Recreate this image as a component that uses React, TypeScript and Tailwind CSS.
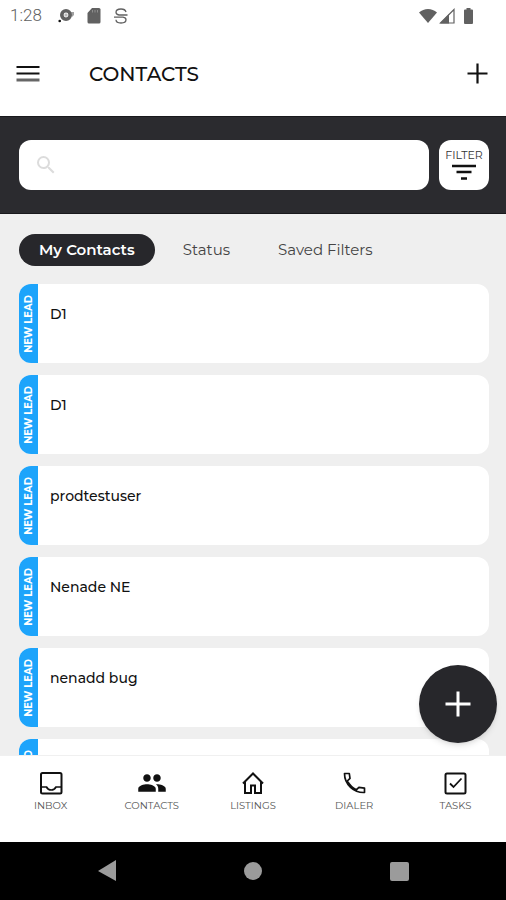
import { useState } from "react";
import type { ReactNode } from "react";
import { MdPeople, MdSearch } from "react-icons/md";

const tabs = ["My Contacts", "Status", "Saved Filters"];

const contacts = [
  { id: 1, name: "D1", status: "NEW LEAD" },
  { id: 2, name: "D1", status: "NEW LEAD" },
  { id: 3, name: "prodtestuser", status: "NEW LEAD" },
  { id: 4, name: "Nenade NE", status: "NEW LEAD" },
  { id: 5, name: "nenadd bug", status: "NEW LEAD" },
  { id: 6, name: "", status: "NEW LEAD" },
];

function InboxIcon() {
  return (
    <svg width="28" height="28" viewBox="0 0 28 28" fill="none" stroke="currentColor" strokeWidth="2">
      <rect x="4" y="4" width="20.500" height="20.500" rx="1.500" />
      <path d="M4 18h5.500q1.500 3 4.700 3t4.800-3h5.500" strokeWidth="1.700" />
    </svg>
  );
}

function HomeIcon() {
  return (
    <svg width="28" height="28" viewBox="0 0 28 28" fill="none" stroke="currentColor" strokeWidth="2">
      <path d="M4 14.500 14 4.500l10 10M6 13V24h6v-7.500h4V24h6V13" />
    </svg>
  );
}

function PhoneIcon() {
  return (
    <svg width="28" height="28" viewBox="0 0 28 28" fill="none" stroke="currentColor" strokeWidth="1.700" strokeLinejoin="round">
      <path d="M4.500 4.500h4.800l.7 4.800-2.700 2.700q3.500 6.200 9 8.800l2.600-2.500 5.600.9v4.300C14 24 4.500 15.500 4.500 4.500z" />
    </svg>
  );
}

function TaskIcon() {
  return (
    <svg width="28" height="28" viewBox="0 0 28 28" fill="none" stroke="currentColor" strokeWidth="2">
      <rect x="4.500" y="4.500" width="20" height="20" rx="1.500" />
      <path d="m9 14.500 3.500 3.500 8-8.500" strokeWidth="1.800" />
    </svg>
  );
}

const navItems: { label: string; icon: ReactNode }[] = [
  { label: "INBOX", icon: <InboxIcon /> },
  { label: "CONTACTS", icon: <MdPeople size={30} /> },
  { label: "LISTINGS", icon: <HomeIcon /> },
  { label: "DIALER", icon: <PhoneIcon /> },
  { label: "TASKS", icon: <TaskIcon /> },
];

function StatusBar() {
  return (
    <div className="flex h-8 shrink-0 items-center justify-between pl-2.5 pr-8 text-[#616161]">
      <div className="flex items-center">
        <span className="w-12 font-['Roboto',sans-serif] text-[17px] font-light">1:28</span>
        {/* Debug, SD card and sync notifications */}
        <svg width="17" height="16" viewBox="0 0 17 16">
          <circle cx="8" cy="7" r="4.200" fill="none" stroke="currentColor" strokeWidth="3.600" />
          <rect x="6.500" y="5.500" width="3" height="3" fill="#bbb" />
          <circle cx="1.700" cy="13" r="1.300" fill="#111" />
          <path d="M13 4h3v3l-2 2z" fill="currentColor" opacity=".6" />
        </svg>
        <svg className="ml-3" width="14" height="16" viewBox="0 0 14 16" fill="currentColor">
          <path d="M5 0h7q1.500 0 1.500 1.500v12.500q0 1.500-1.500 1.500H2Q.5 15.500.5 14V5z" />
          <path d="M5.500 2v2.500M8 2v2.500M10.500 2v2.500" stroke="#999" strokeWidth=".8" />
        </svg>
        <svg className="ml-3" width="16" height="16" viewBox="0 0 16 16" fill="none" stroke="currentColor" strokeWidth="1.300">
          <path d="M13 4C12.500 2 10.500 1 8 1 4.500 1 3 2.500 3 4.300 3 6 4.200 6.700 6 7h8.500M1 9.200h9c2 .3 3 1.200 3 2.600 0 2-2 3.200-5 3.200s-5-1.200-5-3.200" />
        </svg>
      </div>
      <div className="flex items-center">
        <svg width="18" height="16" viewBox="0 0 18 16" fill="currentColor">
          <path d="M9 15 0 4.500Q4 1 9 1t9 3.500z" />
        </svg>
        <svg className="ml-0.5" width="16" height="16" viewBox="0 0 16 16">
          <path d="M1.500 15 15 1.500V15z" fill="none" stroke="currentColor" strokeWidth="1.200" />
          <path d="M1 15.500 10 6v9.500z" fill="currentColor" />
        </svg>
        <svg className="ml-2" width="11" height="16" viewBox="0 0 11 16" fill="currentColor">
          <path d="M3.500 0h4v1.500H9q1 0 1 1V15q0 1-1 1H2q-1 0-1-1V2.500q0-1 1-1h1.500z" />
        </svg>
      </div>
    </div>
  );
}

export default function App() {
  const [activeTab, setActiveTab] = useState(tabs[0]);
  const [query, setQuery] = useState("");

  const visible = contacts.filter((contact) =>
    contact.name.toLowerCase().includes(query.toLowerCase())
  );

  return (
    <div className="flex h-screen flex-col overflow-hidden bg-white font-['Montserrat','Inter',sans-serif] text-[#111]">
      <StatusBar />

      {/* Header */}
      <header className="flex h-[84px] shrink-0 items-center px-4">
        <button aria-label="Menu" className="flex">
          <svg width="24" height="20" viewBox="0 0 24 20" stroke="currentColor" strokeWidth="2">
            <path d="M.5 3h23M.5 9.500h23" />
            <path d="M.5 16h23" stroke="#666" strokeWidth="3" />
          </svg>
        </button>
        <h1 className="ml-[49px] flex-1 text-xl font-medium">CONTACTS</h1>
        <button aria-label="Add contact" className="flex">
          <svg width="24" height="24" viewBox="0 0 24 24" stroke="currentColor" strokeWidth="2.200">
            <path d="M1.500 11.500h20M11.500 1.500v20" />
          </svg>
        </button>
      </header>

      {/* Search */}
      <div className="flex h-[98px] shrink-0 items-center gap-2.5 border-y border-[#19191c] bg-[#2b2b2f] pl-[19px] pr-[17px]">
        <label className="flex h-[50px] min-w-0 flex-1 items-center rounded-xl bg-white px-[15px]">
          <MdSearch size={24} className="shrink-0 text-[#dcdcdc]" />
          <input
            type="text"
            aria-label="Search contacts"
            value={query}
            onChange={(e) => setQuery(e.target.value)}
            className="ml-2 min-w-0 flex-1 bg-transparent text-sm outline-none"
          />
        </label>
        <button className="flex h-[50px] w-[50px] flex-col items-center rounded-xl bg-white pt-2">
          <span className="text-[11px] leading-[14px] text-[#333]">FILTER</span>
          <svg width="24" height="20" viewBox="0 0 24 20" stroke="currentColor" strokeWidth="2.400">
            <path d="M0 4h24M4.500 10h15M9 16.500h6" />
          </svg>
        </button>
      </div>

      {/* Contact list */}
      <main className="relative min-h-0 flex-1 overflow-hidden bg-[#efefef]">
        <div className="flex gap-2 pt-5 pl-[19px]">
          {tabs.map((tab) => (
            <button
              key={tab}
              onClick={() => setActiveTab(tab)}
              className={`h-8 rounded-full px-5 text-[15px] ${
                tab === activeTab ? "bg-[#27272b] font-semibold text-white" : "text-[#444]"
              }`}
            >
              {tab}
            </button>
          ))}
        </div>
        <ul className="mt-[18px] flex flex-col gap-3 pl-[19px] pr-[17px]">
          {visible.map((contact) => (
            <li key={contact.id} className="flex h-[79px] shrink-0 overflow-hidden rounded-xl bg-white">
              <div className="flex w-[19px] items-center justify-center bg-[#1da4fb]">
                <span className="rotate-180 text-[10px] leading-none font-bold text-white [writing-mode:vertical-rl]">
                  {contact.status}
                </span>
              </div>
              <p className="pt-5 pl-3 text-sm font-medium">{contact.name}</p>
            </li>
          ))}
        </ul>
        <button
          aria-label="Add"
          className="absolute right-[9px] bottom-3 flex size-[78px] items-center justify-center rounded-full bg-[#27272b] text-white shadow-md"
        >
          <svg width="26" height="26" viewBox="0 0 26 26" stroke="currentColor" strokeWidth="3">
            <path d="M.5 13h25M13 .5v25" />
          </svg>
        </button>
      </main>

      {/* Bottom navigation */}
      <nav className="flex h-[87px] shrink-0 border-t border-[#f0f0f0]">
        {navItems.map((item) => (
          <a key={item.label} href="#" className="flex flex-1 flex-col items-center pt-3">
            <span className="flex h-[30px] items-center">{item.icon}</span>
            <span className="text-[10px] leading-4 text-[#555]">{item.label}</span>
          </a>
        ))}
      </nav>

      {/* System navigation */}
      <div className="flex h-[58px] shrink-0 items-center justify-center gap-32 bg-black text-[#9b9b9b]">
        <button aria-label="Back">
          <svg width="18" height="22" viewBox="0 0 18 22" fill="currentColor">
            <path d="M18 0v21L0 11z" />
          </svg>
        </button>
        <button aria-label="Home" className="size-[18px] rounded-full bg-[#9b9b9b]" />
        <button aria-label="Recent apps" className="size-[19px] rounded-xs bg-[#9b9b9b]" />
      </div>
    </div>
  );
}
